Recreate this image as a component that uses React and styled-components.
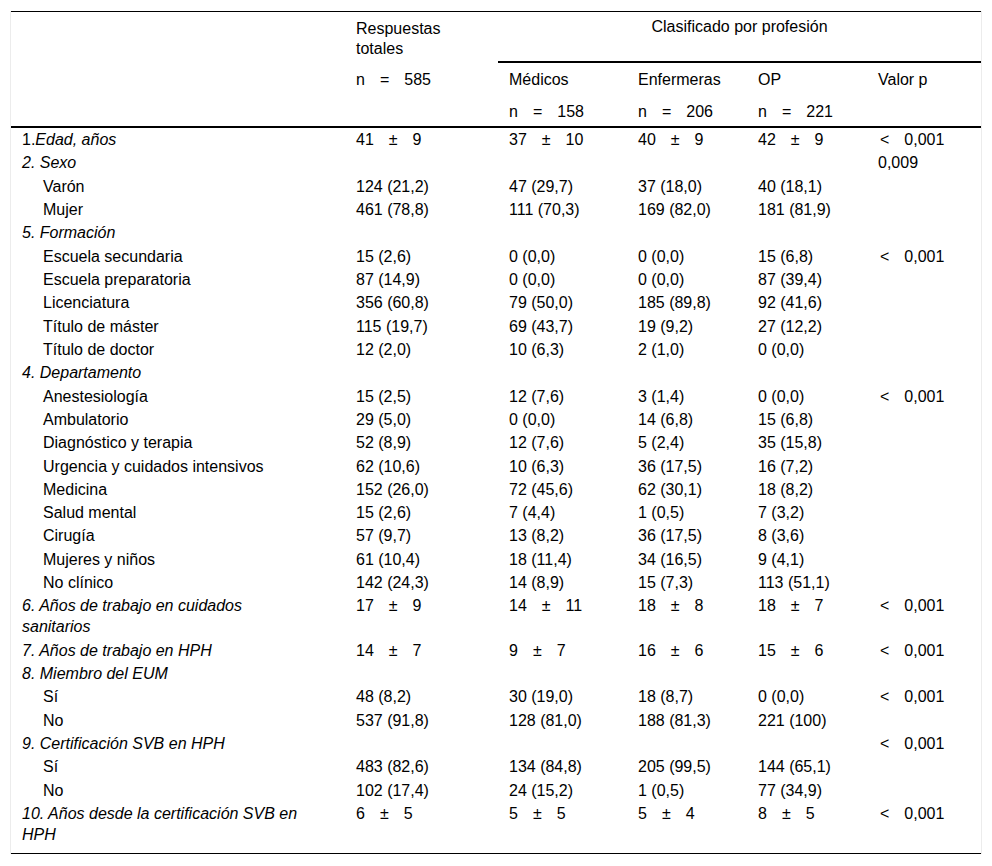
import React from "react";
import styled, { createGlobalStyle } from "styled-components";

const Global = createGlobalStyle`
  html, body { margin: 0; padding: 0; background: #fff; }
  body { font-family: "Liberation Sans", Arial, sans-serif; color: #000; }
`;

const Page = styled.div`
  padding: 11px 0 0 10px;
`;

const Frame = styled.div`
  width: 970px;
  border-left: 1px solid #ececec;
  border-right: 1px solid #ececec;
`;

const Table = styled.table`
  width: 970px;
  table-layout: fixed;
  border-collapse: separate;
  border-spacing: 0;
  border-top: 1px solid #000;
  border-bottom: 1px solid #000;
  font-size: 16px;
`;

const Th = styled.th`
  text-align: ${(p) => (p.$center ? "center" : "left")};
  font-weight: normal;
  vertical-align: top;
  line-height: 20px;
  padding: ${(p) => (p.$pt != null ? p.$pt : 5)}px 11px ${(p) => (p.$pb != null ? p.$pb : 5)}px;
  border-bottom: ${(p) => (p.$rule ? "2px solid #000" : "none")};
`;

const Td = styled.td`
  vertical-align: top;
  line-height: 21px;
  padding: 1.17px ${(p) => (p.$label ? 40 : 11)}px 1.17px ${(p) => (p.$indent ? 32 : 11)}px;
`;

const BodyRow = styled.tr`
  &:first-child td {
    border-top: 2px solid #000;
  }
  &:last-child td {
    padding-bottom: 8px;
  }
`;

const Em = styled.i`
  font-style: italic;
`;

const Sym = styled.span`
  margin: 0 15px 0 ${(p) => (p.$lead ? 2 : 15)}px;
`;

const Pm = ({ a, b }) => (
  <>
    {a}
    <Sym>±</Sym>
    {b}
  </>
);

const Lt = () => (
  <>
    <Sym $lead>&lt;</Sym>
    0,001
  </>
);

const N = ({ x }) => (
  <>
    n<Sym>=</Sym>
    {x}
  </>
);

const pm = (a, b) => <Pm a={a} b={b} />;
const lt = <Lt />;

const rows = [
  { pre: "1.", label: "Edad, años", v: [pm(41, 9), pm(37, 10), pm(40, 9), pm(42, 9), lt] },
  { label: "2. Sexo", v: ["", "", "", "", "0,009"] },
  { sub: true, label: "Varón", v: ["124 (21,2)", "47 (29,7)", "37 (18,0)", "40 (18,1)", ""] },
  { sub: true, label: "Mujer", v: ["461 (78,8)", "111 (70,3)", "169 (82,0)", "181 (81,9)", ""] },
  { label: "5. Formación", v: ["", "", "", "", ""] },
  { sub: true, label: "Escuela secundaria", v: ["15 (2,6)", "0 (0,0)", "0 (0,0)", "15 (6,8)", lt] },
  { sub: true, label: "Escuela preparatoria", v: ["87 (14,9)", "0 (0,0)", "0 (0,0)", "87 (39,4)", ""] },
  { sub: true, label: "Licenciatura", v: ["356 (60,8)", "79 (50,0)", "185 (89,8)", "92 (41,6)", ""] },
  { sub: true, label: "Título de máster", v: ["115 (19,7)", "69 (43,7)", "19 (9,2)", "27 (12,2)", ""] },
  { sub: true, label: "Título de doctor", v: ["12 (2,0)", "10 (6,3)", "2 (1,0)", "0 (0,0)", ""] },
  { label: "4. Departamento", v: ["", "", "", "", ""] },
  { sub: true, label: "Anestesiología", v: ["15 (2,5)", "12 (7,6)", "3 (1,4)", "0 (0,0)", lt] },
  { sub: true, label: "Ambulatorio", v: ["29 (5,0)", "0 (0,0)", "14 (6,8)", "15 (6,8)", ""] },
  { sub: true, label: "Diagnóstico y terapia", v: ["52 (8,9)", "12 (7,6)", "5 (2,4)", "35 (15,8)", ""] },
  { sub: true, label: "Urgencia y cuidados intensivos", v: ["62 (10,6)", "10 (6,3)", "36 (17,5)", "16 (7,2)", ""] },
  { sub: true, label: "Medicina", v: ["152 (26,0)", "72 (45,6)", "62 (30,1)", "18 (8,2)", ""] },
  { sub: true, label: "Salud mental", v: ["15 (2,6)", "7 (4,4)", "1 (0,5)", "7 (3,2)", ""] },
  { sub: true, label: "Cirugía", v: ["57 (9,7)", "13 (8,2)", "36 (17,5)", "8 (3,6)", ""] },
  { sub: true, label: "Mujeres y niños", v: ["61 (10,4)", "18 (11,4)", "34 (16,5)", "9 (4,1)", ""] },
  { sub: true, label: "No clínico", v: ["142 (24,3)", "14 (8,9)", "15 (7,3)", "113 (51,1)", ""] },
  { label: "6. Años de trabajo en cuidados sanitarios", v: [pm(17, 9), pm(14, 11), pm(18, 8), pm(18, 7), lt] },
  { label: "7. Años de trabajo en HPH", v: [pm(14, 7), pm(9, 7), pm(16, 6), pm(15, 6), lt] },
  { label: "8. Miembro del EUM", v: ["", "", "", "", ""] },
  { sub: true, label: "Sí", v: ["48 (8,2)", "30 (19,0)", "18 (8,7)", "0 (0,0)", lt] },
  { sub: true, label: "No", v: ["537 (91,8)", "128 (81,0)", "188 (81,3)", "221 (100)", ""] },
  { label: "9. Certificación SVB en HPH", v: ["", "", "", "", lt] },
  { sub: true, label: "Sí", v: ["483 (82,6)", "134 (84,8)", "205 (99,5)", "144 (65,1)", ""] },
  { sub: true, label: "No", v: ["102 (17,4)", "24 (15,2)", "1 (0,5)", "77 (34,9)", ""] },
  { label: "10. Años desde la certificación SVB en HPH", v: [pm(6, 5), pm(5, 5), pm(5, 4), pm(8, 5), lt] },
];

export default function App() {
  return (
    <Page>
      <Global />
      <Frame>
        <Table>
          <colgroup>
            <col style={{ width: 334 }} />
            <col style={{ width: 153 }} />
            <col style={{ width: 129 }} />
            <col style={{ width: 120 }} />
            <col style={{ width: 120 }} />
            <col style={{ width: 114 }} />
          </colgroup>
          <thead>
            <tr>
              <Th rowSpan={3} />
              <Th $pt={7} $pb={4}>
                Respuestas
                <br />
                totales
              </Th>
              <Th colSpan={4} $center $rule $pb={6}>
                Clasificado por profesión
              </Th>
            </tr>
            <tr>
              <Th $pt={7} $pb={6}>
                <N x={585} />
              </Th>
              <Th $pt={7} $pb={6}>Médicos</Th>
              <Th $pt={7} $pb={6}>Enfermeras</Th>
              <Th $pt={7} $pb={6}>OP</Th>
              <Th $pt={7} $pb={6}>Valor p</Th>
            </tr>
            <tr>
              <Th />
              <Th $pt={6} $pb={4}>
                <N x={158} />
              </Th>
              <Th $pt={6} $pb={4}>
                <N x={206} />
              </Th>
              <Th $pt={6} $pb={4}>
                <N x={221} />
              </Th>
              <Th />
            </tr>
          </thead>
          <tbody>
            {rows.map((r, i) => (
              <BodyRow key={i}>
                <Td $label $indent={r.sub}>
                  {r.sub ? (
                    r.label
                  ) : (
                    <>
                      {r.pre}
                      <Em>{r.label}</Em>
                    </>
                  )}
                </Td>
                {r.v.map((x, j) => (
                  <Td key={j}>{x}</Td>
                ))}
              </BodyRow>
            ))}
          </tbody>
        </Table>
      </Frame>
    </Page>
  );
}
